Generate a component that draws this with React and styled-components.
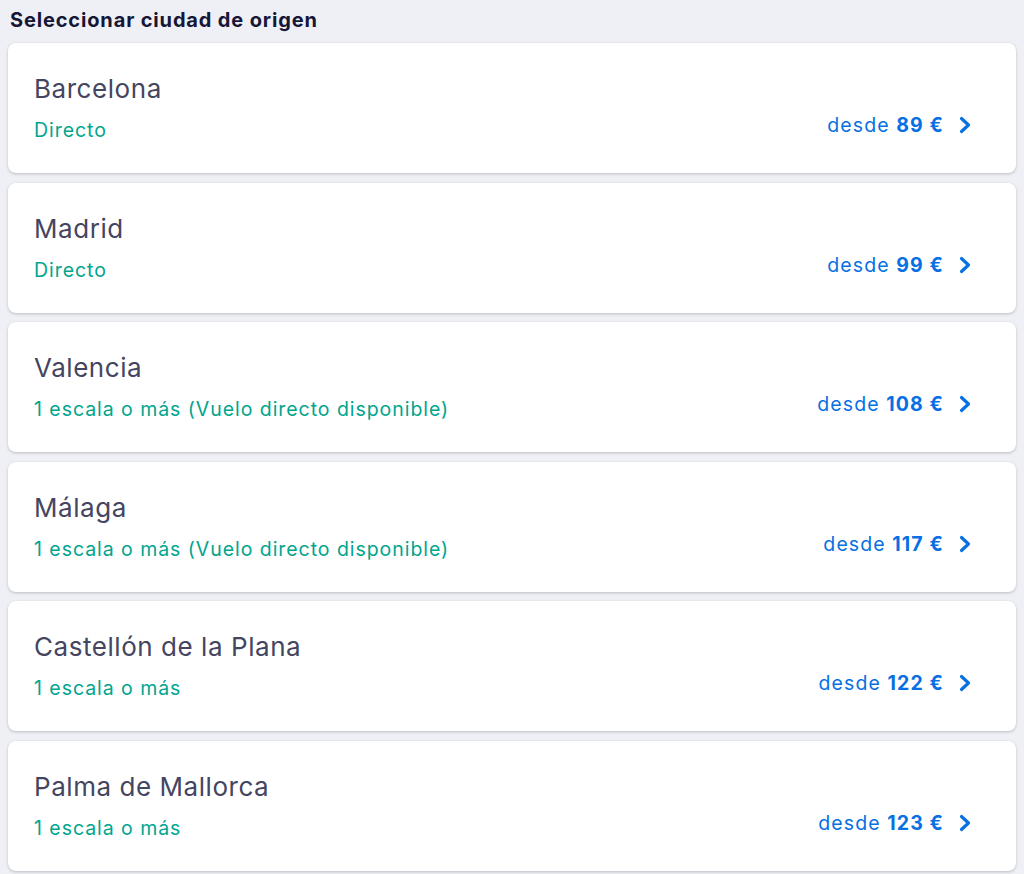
import React from "react";
import styled, { createGlobalStyle } from "styled-components";

const Global = createGlobalStyle`
  html, body { margin: 0; padding: 0; background: #eff0f5; }
  body { font-family: Inter, "Noto Sans", sans-serif; -webkit-font-smoothing: antialiased; }
`;

const Page = styled.div`
  padding: 7px 8px 4px 8px;
  display: flex;
  flex-direction: column;
`;

const Title = styled.h2`
  margin: 0 0 9px 2px;
  font-size: 20px;
  line-height: 27px;
  font-weight: 700;
  color: #161637;
  letter-spacing: 0.85px;
`;

const List = styled.div`
  display: flex;
  flex-direction: column;
  gap: 9.5px;
`;

const Card = styled.div`
  background: #fff;
  border-radius: 8px;
  box-shadow: 0 1px 3px rgba(37, 32, 60, 0.25);
  height: 130px;
  box-sizing: border-box;
  padding: 31px 43px 0 26px;
  display: flex;
  justify-content: space-between;
  cursor: pointer;
`;

const Info = styled.div`
  display: flex;
  flex-direction: column;
`;

const City = styled.div`
  font-size: 26px;
  line-height: 30px;
  color: #444560;
  letter-spacing: 0.55px;
`;

const Stops = styled.div`
  margin-top: 13px;
  font-size: 19.5px;
  line-height: 26px;
  color: #00a58e;
  letter-spacing: 0.95px;
`;

const PriceBox = styled.div`
  margin-top: 38px;
  display: flex;
  align-items: center;
  gap: 14px;
  height: 26px;
  color: #0770e3;
`;

const Price = styled.span`
  font-size: 19.5px;
  line-height: 26px;
  letter-spacing: 1.1px;
  margin-right: -1px;
  b { font-weight: 700; }
`;

const Chevron = () => (
  <svg width="16" height="20" viewBox="0 0 16 20" aria-hidden="true">
    <path d="M4.5 3.5 L11.5 10 L4.5 16.5" fill="none" stroke="#0770e3" strokeWidth="3.2" strokeLinecap="round" strokeLinejoin="round" />
  </svg>
);

const cities = [
  { name: "Barcelona", stops: "Directo", price: "89" },
  { name: "Madrid", stops: "Directo", price: "99" },
  { name: "Valencia", stops: "1 escala o más (Vuelo directo disponible)", price: "108" },
  { name: "Málaga", stops: "1 escala o más (Vuelo directo disponible)", price: "117" },
  { name: "Castellón de la Plana", stops: "1 escala o más", price: "122" },
  { name: "Palma de Mallorca", stops: "1 escala o más", price: "123" },
];

export default function App() {
  return (
    <>
      <Global />
      <Page>
        <Title>Seleccionar ciudad de origen</Title>
        <List>
          {cities.map((c) => (
            <Card key={c.name}>
              <Info>
                <City>{c.name}</City>
                <Stops>{c.stops}</Stops>
              </Info>
              <PriceBox>
                <Price>
                  desde <b>{c.price} €</b>
                </Price>
                <Chevron />
              </PriceBox>
            </Card>
          ))}
        </List>
      </Page>
    </>
  );
}
